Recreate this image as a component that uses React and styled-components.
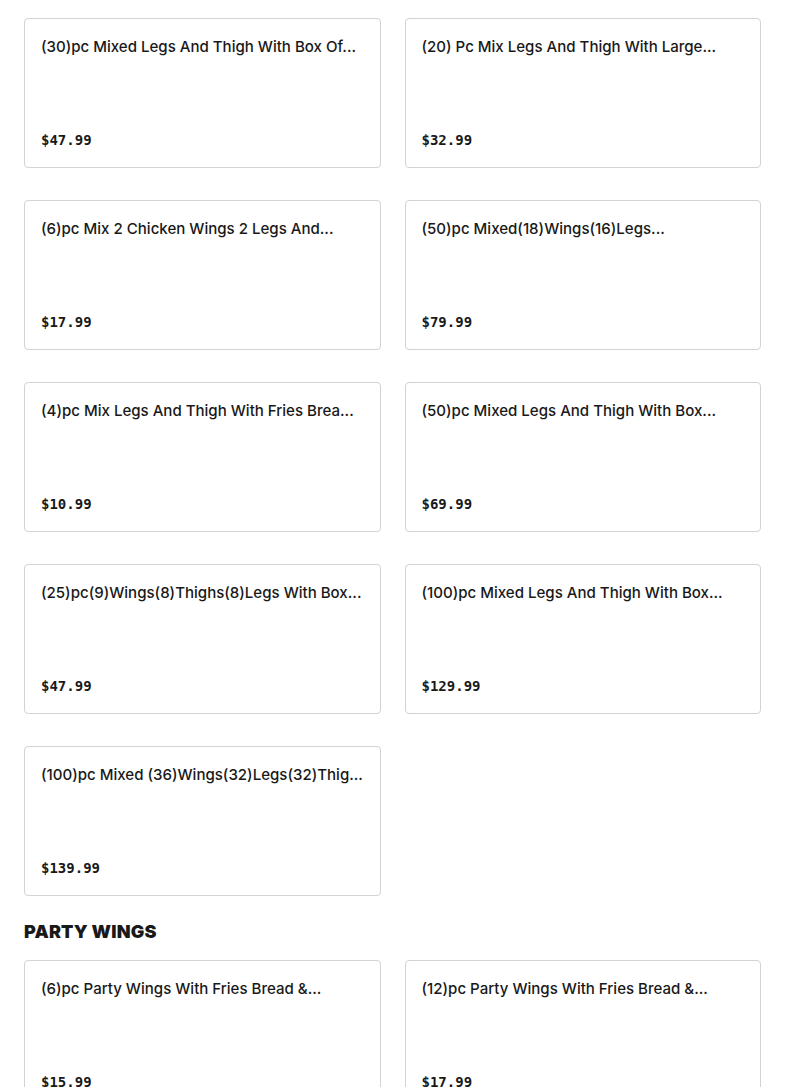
import React from "react";
import styled, { createGlobalStyle } from "styled-components";

const Global = createGlobalStyle`
  html, body { margin: 0; padding: 0; background: #ffffff; }
  body { font-family: Inter, "Noto Sans", sans-serif; color: #191919; }
`;

const Page = styled.div`
  padding: 18px 24px 24px;
`;

const Section = styled.section`
  display: flex;
  flex-direction: column;
`;

const Heading = styled.h2`
  margin: 24px 0 16px;
  font-family: Inter, "Noto Sans", sans-serif;
  font-weight: 900;
  font-size: 18px;
  line-height: 24px;
  letter-spacing: 0.2px;
  text-transform: uppercase;
  color: #191919;
`;

const Grid = styled.div`
  display: grid;
  grid-template-columns: 1fr 1fr;
  column-gap: 24px;
  row-gap: 32px;
`;

const Card = styled.div`
  box-sizing: border-box;
  height: 150px;
  border: 1px solid #d3d3d3;
  border-radius: 4px;
  padding: 16px 16px 17px;
  display: flex;
  flex-direction: column;
  justify-content: space-between;
  background: #fff;
  min-width: 0;
`;

const Title = styled.div`
  font-family: Inter, "Noto Sans", sans-serif;
  font-weight: 500;
  font-size: 15.05px;
  line-height: 24px;
  color: #191919;
  white-space: nowrap;
  overflow: hidden;
`;

const Price = styled.div`
  font-family: "DejaVu Sans Mono", "Liberation Mono", monospace;
  font-weight: 700;
  font-size: 14px;
  line-height: 20px;
  color: #191919;
`;

const mixed = [
  ["(30)pc Mixed Legs And Thigh With Box Of...", "$47.99"],
  ["(20) Pc Mix Legs And Thigh With Large...", "$32.99"],
  ["(6)pc Mix 2 Chicken Wings 2 Legs And...", "$17.99"],
  ["(50)pc Mixed(18)Wings(16)Legs...", "$79.99"],
  ["(4)pc Mix Legs And Thigh With Fries Brea...", "$10.99"],
  ["(50)pc Mixed Legs And Thigh With Box...", "$69.99"],
  ["(25)pc(9)Wings(8)Thighs(8)Legs With Box...", "$47.99"],
  ["(100)pc Mixed Legs And Thigh With Box...", "$129.99"],
  ["(100)pc Mixed (36)Wings(32)Legs(32)Thig...", "$139.99"],
];

const party = [
  ["(6)pc Party Wings With Fries Bread &...", "$15.99"],
  ["(12)pc Party Wings With Fries Bread &...", "$17.99"],
];

const Item = ({ title, price }) => (
  <Card>
    <Title>{title}</Title>
    <Price>{price}</Price>
  </Card>
);

export default function App() {
  return (
    <>
      <Global />
      <Page>
        <Section>
          <Grid>
            {mixed.map(([t, p], i) => (
              <Item key={i} title={t} price={p} />
            ))}
          </Grid>
        </Section>
        <Section>
          <Heading>Party Wings</Heading>
          <Grid>
            {party.map(([t, p], i) => (
              <Item key={i} title={t} price={p} />
            ))}
          </Grid>
        </Section>
      </Page>
    </>
  );
}
